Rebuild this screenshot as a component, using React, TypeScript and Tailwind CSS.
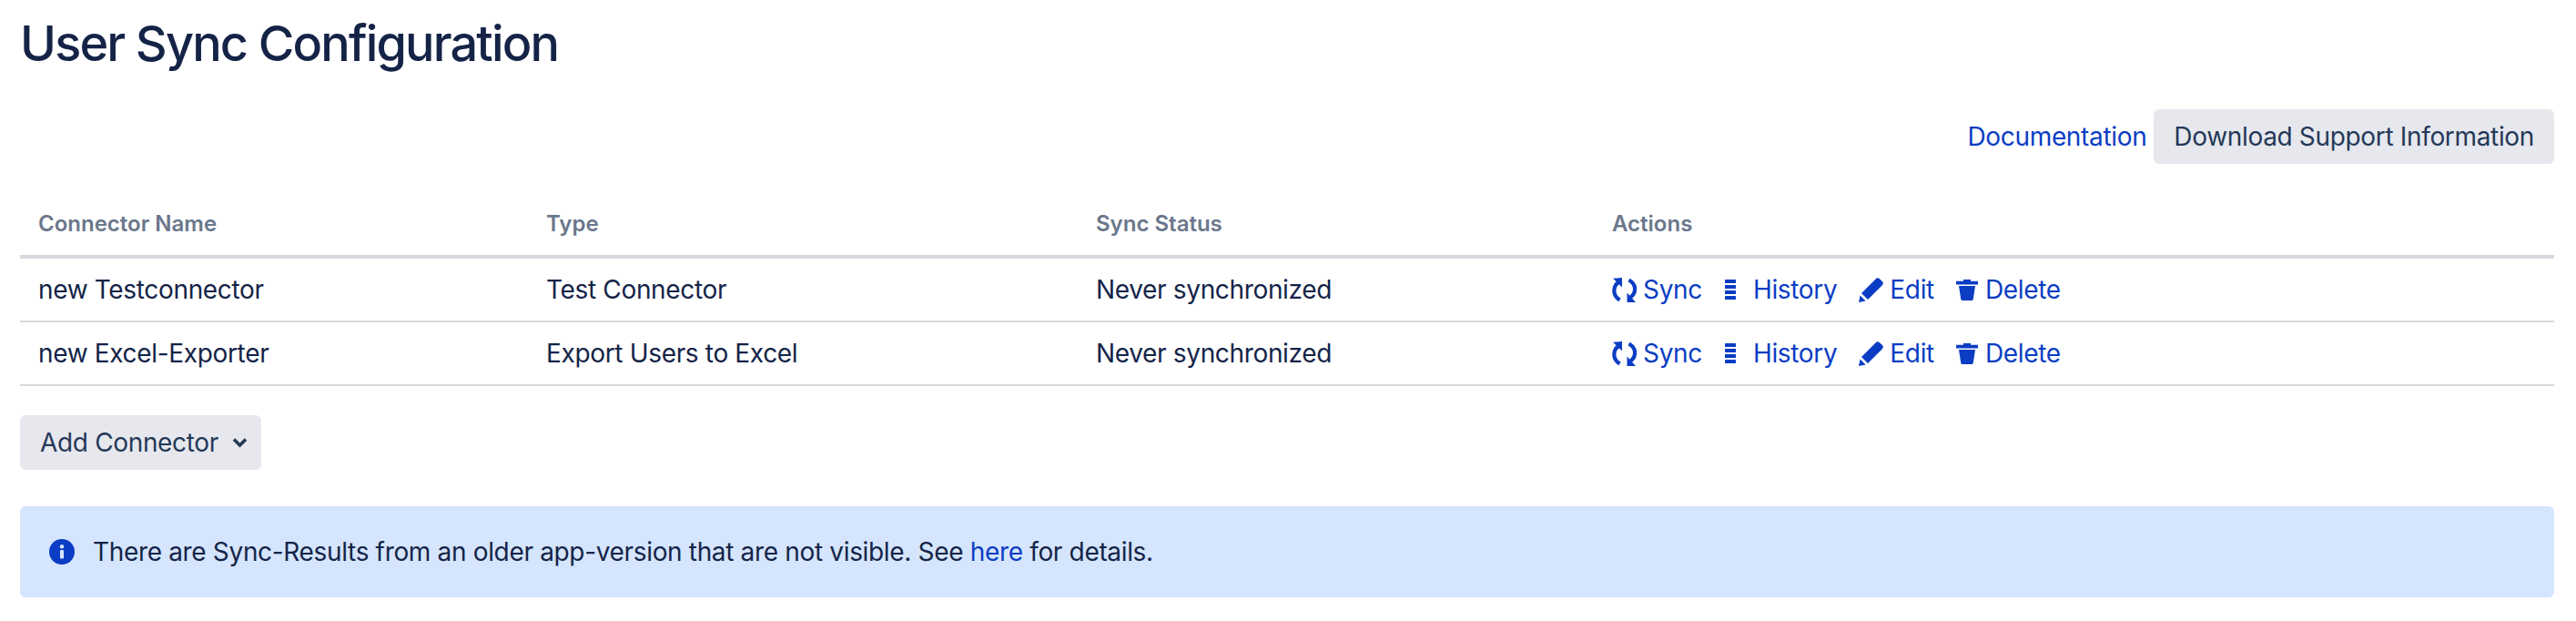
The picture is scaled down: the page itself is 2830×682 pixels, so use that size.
const rows = [
  { name: "new Testconnector", type: "Test Connector", status: "Never synchronized" },
  { name: "new Excel-Exporter", type: "Export Users to Excel", status: "Never synchronized" },
];

function SyncIcon() {
  return (
    <svg viewBox="0 0 27 27" className="h-[27px] w-[27px]" fill="none">
      <path d="M8.5 4.5C0.5 8.5 0 19 8.5 24.5" stroke="currentColor" strokeWidth="4.2" />
      <path d="M1 0.8L11 0V10.5Z" fill="currentColor" />
      <path d="M18.5 2.5C27.5 7.5 27 18 18.5 22.5" stroke="currentColor" strokeWidth="4.2" />
      <path d="M16.5 16.5V27H26Z" fill="currentColor" />
    </svg>
  );
}

function HistoryIcon() {
  return (
    <svg viewBox="0 0 12 22" className="h-[22px] w-[12px]" fill="currentColor">
      <rect y="0" width="12" height="4" rx="0.6" />
      <rect y="6" width="12" height="4" />
      <rect y="12" width="12" height="4" />
      <rect y="18" width="12" height="4" rx="0.6" />
    </svg>
  );
}

function EditIcon() {
  return (
    <svg viewBox="0 0 27 27" className="h-[27px] w-[27px]" fill="currentColor">
      <path d="M3 17L18.8 1.2C20.2 -0.2 21.6 -0.2 23 1.2L25.8 4C27.2 5.4 27.2 6.8 25.8 8.2L10 24Z" />
      <path d="M1.6 19.4L7.6 25.4L0 27Z" />
    </svg>
  );
}

function DeleteIcon() {
  return (
    <svg viewBox="0 0 24 23" className="h-[23px] w-[24px]" fill="currentColor">
      <path d="M8 0H16V1.8H24V5.5H0V1.8H8Z" />
      <path d="M3 7H21L18.8 21.2C18.6 22.4 18 23 16.8 23H7.2C6 23 5.4 22.4 5.2 21.2Z" />
    </svg>
  );
}

function Actions() {
  return (
    <div className="flex items-center text-[#0b3dc4]">
      <a href="#" className="flex items-center">
        <SyncIcon />
        <span className="ml-[7px]">Sync</span>
      </a>
      <a href="#" className="ml-[25px] flex items-center">
        <HistoryIcon />
        <span className="ml-[19px]">History</span>
      </a>
      <a href="#" className="ml-[24px] flex items-center">
        <EditIcon />
        <span className="ml-[7px]">Edit</span>
      </a>
      <a href="#" className="ml-[24px] flex items-center">
        <DeleteIcon />
        <span className="ml-[8px]">Delete</span>
      </a>
    </div>
  );
}

export default function App() {
  return (
    <div className="min-h-[682px] bg-white pr-[24px] pl-[22px] font-['Inter',sans-serif] text-[28px] leading-[40px] tracking-[-0.012em] text-[#142448]">
      <h1 className="h-[120px] pt-[22px] text-[54px] leading-[52px] font-medium tracking-[-0.034em] text-[#152347]">
        User Sync Configuration
      </h1>

      <div className="flex h-[60px] items-center justify-end gap-[8px]">
        <a href="#" className="text-[#0b3dc4]">Documentation</a>
        <button className="h-[60px] rounded-[6px] bg-[#e6e8ed] px-[22px] text-[#253858]">
          Download Support Information
        </button>
      </div>

      <table className="mt-[24px] w-full table-fixed border-separate border-spacing-0">
        <thead>
          <tr className="h-[80px] text-left text-[24px] tracking-normal text-[#6b778c]">
            <th className="w-[558px] border-b-4 border-[#d6d9de] pt-[8px] pl-[20px] font-semibold">Connector Name</th>
            <th className="w-[604px] border-b-4 border-[#d6d9de] pt-[8px] pl-[20px] font-semibold">Type</th>
            <th className="w-[567px] border-b-4 border-[#d6d9de] pt-[8px] pl-[20px] font-semibold">Sync Status</th>
            <th className="border-b-4 border-[#d6d9de] pt-[8px] pl-[20px] font-semibold">Actions</th>
          </tr>
        </thead>
        <tbody>
          {rows.map((row) => (
            <tr key={row.name} className="h-[70px]">
              <td className="border-b-2 border-[#d6d9de] pl-[20px]">{row.name}</td>
              <td className="border-b-2 border-[#d6d9de] pl-[20px]">{row.type}</td>
              <td className="border-b-2 border-[#d6d9de] pl-[20px]">{row.status}</td>
              <td className="border-b-2 border-[#d6d9de] pl-[20px]"><Actions /></td>
            </tr>
          ))}
        </tbody>
      </table>

      <button className="mt-[32px] flex h-[60px] items-center rounded-[6px] bg-[#e6e8ed] pr-[15px] pl-[22px] text-[#253858]">
        Add Connector
        <svg viewBox="0 0 17 12" className="ml-[15px] h-[12px] w-[17px]" fill="none">
          <path d="M2 2.5L8.5 9L15 2.5" stroke="currentColor" strokeWidth="3.6" />
        </svg>
      </button>

      <div className="mt-[40px] flex h-[100px] items-center rounded-[6px] bg-[#d5e5fd] pl-[32px]">
        <svg viewBox="0 0 28 28" className="h-[28px] w-[28px]">
          <circle cx="14" cy="14" r="14" fill="#0b3dc4" />
          <rect x="12" y="12" width="4" height="9.5" rx="1" fill="#d5e5fd" />
          <circle cx="14" cy="8.2" r="2.2" fill="#d5e5fd" />
        </svg>
        <p className="ml-[20px]">
          There are Sync-Results from an older app-version that are not visible. See{" "}
          <a href="#" className="text-[#0b3dc4]">here</a> for details.
        </p>
      </div>
    </div>
  );
}
